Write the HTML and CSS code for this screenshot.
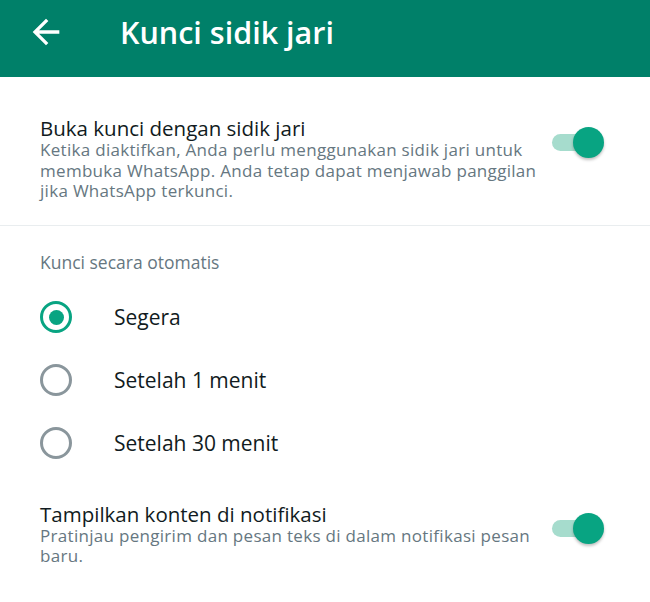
FILE: index.html
```html
<!DOCTYPE html>
<html lang="id">
<head>
    <meta charset="UTF-8">
    <meta name="viewport" content="width=device-width, initial-scale=1.0">
    <title>Kunci sidik jari</title>
    <link rel="stylesheet" href="styles.css">
</head>
<body>
    <header class="appbar">
        <div class="appbar-row">
            <svg class="back-icon" viewBox="0 0 24 24"><path d="M20 11H7.83l5.59-5.59L12 4l-8 8 8 8 1.41-1.41L7.83 13H20v-2z"/></svg>
            <h1 class="appbar-title">Kunci sidik jari</h1>
        </div>
    </header>

    <section class="setting first">
        <div class="setting-text">
            <div class="setting-title">Buka kunci dengan sidik jari</div>
            <div class="setting-desc">Ketika diaktifkan, Anda perlu menggunakan sidik jari untuk membuka WhatsApp. Anda tetap dapat menjawab panggilan jika WhatsApp terkunci.</div>
        </div>
        <div class="switch"><span class="track"></span><span class="thumb"></span></div>
    </section>

    <div class="divider"></div>

    <div class="group-label">Kunci secara otomatis</div>
    <ul class="radio-list">
        <li class="radio-row"><span class="radio checked"></span>Segera</li>
        <li class="radio-row"><span class="radio"></span>Setelah 1 menit</li>
        <li class="radio-row"><span class="radio"></span>Setelah 30 menit</li>
    </ul>

    <section class="setting last">
        <div class="setting-text">
            <div class="setting-title">Tampilkan konten di notifikasi</div>
            <div class="setting-desc">Pratinjau pengirim dan pesan teks di dalam notifikasi pesan baru.</div>
        </div>
        <div class="switch"><span class="track"></span><span class="thumb"></span></div>
    </section>
</body>
</html>
```

FILE: styles.css
```css
body {
    margin: 0;
    font-family: "Open Sans", "Noto Sans", sans-serif;
    background: #ffffff;
    color: #111b21;
}
.appbar {
    height: 77px;
    background-color: #008069;
    color: white;
}
.appbar-row {
    height: 64px;
    display: flex;
    align-items: center;
}
.back-icon {
    width: 40px;
    height: 40px;
    margin-left: 26px;
    fill: white;
}
.appbar-title {
    margin: 0 0 0 54px;
    font-size: 30.5px;
    font-weight: 600;
}
.setting {
    display: flex;
    align-items: flex-start;
    padding: 0 46px 0 40px;
}
.setting.first {
    padding-top: 40px;
    padding-bottom: 23px;
}
.setting.last {
    padding-top: 28px;
}
.setting-text {
    flex: 1;
    margin-right: 12px;
}
.setting-title {
    font-size: 20.5px;
    line-height: 23px;
}
.setting-desc {
    font-size: 17px;
    line-height: 20.5px;
    letter-spacing: 0.3px;
    color: #667781;
}
.switch {
    position: relative;
    width: 52px;
    height: 32px;
    margin-top: 10px;
    flex-shrink: 0;
}
.track {
    position: absolute;
    left: 0;
    top: 7px;
    width: 40px;
    height: 17px;
    border-radius: 9px;
    background-color: #a6dccd;
}
.thumb {
    position: absolute;
    right: 0;
    top: 0;
    width: 31px;
    height: 31px;
    border-radius: 50%;
    background-color: #08a482;
    box-shadow: 0 2px 3px rgba(0, 0, 0, 0.25);
}
.divider {
    height: 1px;
    background-color: #e9edef;
}
.group-label {
    padding: 25px 40px 0;
    font-size: 17.5px;
    line-height: 22px;
    color: #667781;
}
.radio-list {
    list-style: none;
    margin: 13px 0 0;
    padding: 0;
}
.radio-row {
    height: 63px;
    display: flex;
    align-items: center;
    padding-left: 40px;
    font-size: 21px;
}
.radio {
    box-sizing: border-box;
    width: 32px;
    height: 32px;
    margin-right: 42px;
    border: 3px solid #8a969c;
    border-radius: 50%;
    display: flex;
    align-items: center;
    justify-content: center;
}
.radio.checked {
    border-color: #08a482;
}
.radio.checked::after {
    content: "";
    width: 15px;
    height: 15px;
    border-radius: 50%;
    background-color: #08a482;
}
```
